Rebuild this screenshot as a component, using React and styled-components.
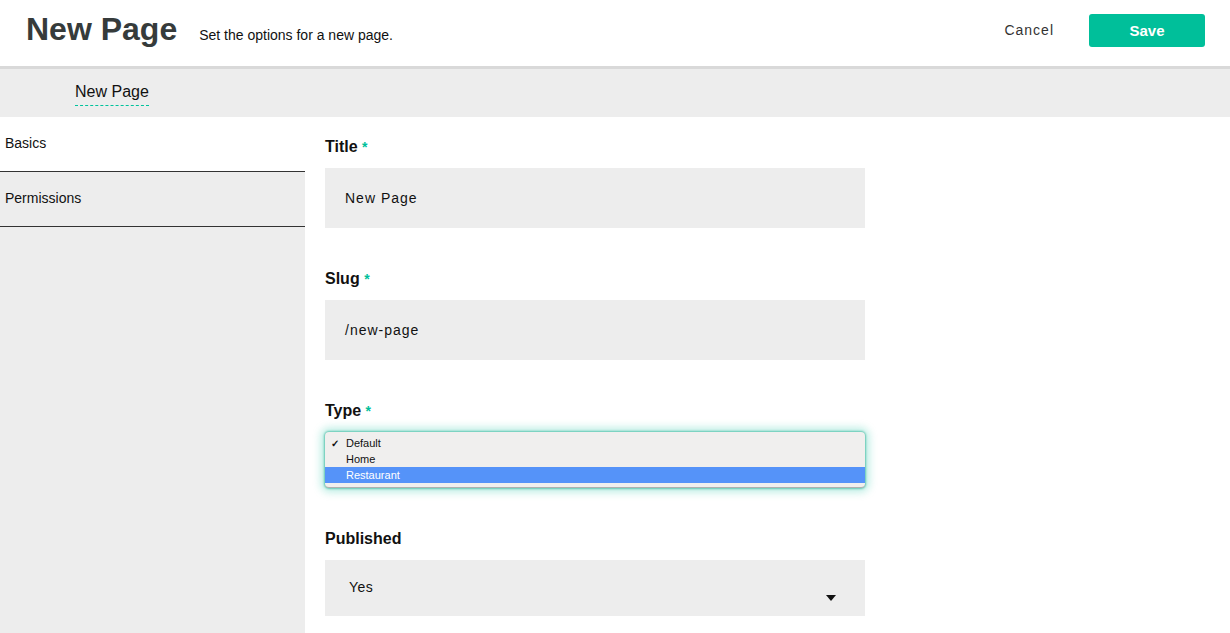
import React from 'react';
import styled, { createGlobalStyle } from 'styled-components';

const GlobalStyle = createGlobalStyle`
  html, body {
    margin: 0;
    padding: 0;
    background: #fff;
    font-family: 'Liberation Sans', Arial, sans-serif;
    color: #111;
  }
  * { box-sizing: border-box; }
`;

const fields = [
  { label: 'Title', required: true, value: 'New Page' },
  { label: 'Slug', required: true, value: '/new-page' },
];

const typeOptions = [
  { name: 'Default', checked: true },
  { name: 'Home' },
  { name: 'Restaurant', active: true },
];

export default function App() {
  return (
    <>
      <GlobalStyle />
      <Header>
        <HeaderLeft>
          <PageTitle>New Page</PageTitle>
          <Subtitle>Set the options for a new page.</Subtitle>
        </HeaderLeft>
        <HeaderActions>
          <CancelButton>Cancel</CancelButton>
          <SaveButton>Save</SaveButton>
        </HeaderActions>
      </Header>

      <TabBar>
        <Tab>New Page</Tab>
      </TabBar>

      <Body>
        <Sidebar>
          <SideItem active>Basics</SideItem>
          <SideItem>Permissions</SideItem>
        </Sidebar>

        <Content>
          {fields.map((f) => (
            <Field key={f.label}>
              <Label>
                {f.label} {f.required && <Star>*</Star>}
              </Label>
              <TextInput>{f.value}</TextInput>
            </Field>
          ))}

          <Field>
            <Label>
              Type <Star>*</Star>
            </Label>
            <OptionList>
              {typeOptions.map((o) => (
                <Option key={o.name} active={o.active}>
                  <Check>{o.checked ? '✓' : ''}</Check>
                  {o.name}
                </Option>
              ))}
            </OptionList>
          </Field>

          <Field>
            <Label>Published</Label>
            <SelectBox>
              <span>Yes</span>
              <svg width="10" height="6" viewBox="0 0 10 6">
                <path d="M0 0 L10 0 L5 6 Z" fill="#111" />
              </svg>
            </SelectBox>
          </Field>
        </Content>
      </Body>
    </>
  );
}

const Header = styled.header`
  height: 69px;
  display: flex;
  align-items: flex-start;
  justify-content: space-between;
  padding: 0 25px 0 26px;
  border-bottom: 3px solid #d9d9d9;
  background: #fff;
`;

const HeaderLeft = styled.div`
  display: flex;
  align-items: baseline;
  gap: 22px;
  padding-top: 10px;
`;

const PageTitle = styled.h1`
  margin: 0;
  font-size: 32px;
  line-height: 38px;
  font-weight: 700;
  color: #363b3b;
`;

const Subtitle = styled.span`
  font-size: 14px;
  color: #111;
`;

const HeaderActions = styled.div`
  display: flex;
  align-items: center;
  gap: 35px;
  padding-top: 14px;
`;

const CancelButton = styled.button`
  border: 0;
  background: none;
  padding: 0 0 2px;
  font-family: inherit;
  font-size: 14px;
  letter-spacing: 1px;
  color: #333;
`;

const SaveButton = styled.button`
  width: 116px;
  height: 33px;
  border: 0;
  border-radius: 3px;
  background: #00bf9a;
  color: #fff;
  font-family: inherit;
  font-size: 15px;
  font-weight: 700;
  padding-bottom: 2px;
`;

const TabBar = styled.nav`
  height: 48px;
  background: #ededed;
  display: flex;
  align-items: flex-start;
  padding: 13px 0 0 75px;
`;

const Tab = styled.div`
  font-size: 16px;
  line-height: 19px;
  padding-bottom: 4px;
  border-bottom: 1px dashed #00c39c;
  color: #111;
`;

const Body = styled.div`
  display: flex;
  min-height: calc(100vh - 117px);
`;

const Sidebar = styled.aside`
  width: 305px;
  flex-shrink: 0;
  background: #ededed;
`;

const SideItem = styled.div`
  height: 55px;
  display: flex;
  align-items: center;
  padding: 0 5px 3px;
  font-size: 14px;
  color: #111;
  background: ${({ active }) => (active ? '#fff' : '#ededed')};
  border-bottom: 1px solid #333;
`;

const Content = styled.main`
  flex: 1;
  padding: 20px 0 0 20px;
  background: #fff;
`;

const Field = styled.div`
  width: 540px;
  margin-bottom: 41px;
`;

const Label = styled.div`
  font-size: 16px;
  line-height: 20px;
  font-weight: 700;
  margin-bottom: 11px;
  color: #111;
`;

const Star = styled.span`
  color: #00bf9a;
  font-size: 14px;
`;

const TextInput = styled.div`
  height: 60px;
  background: #ededed;
  display: flex;
  align-items: center;
  padding-left: 20px;
  font-size: 14px;
  letter-spacing: 1px;
  color: #111;
`;

const OptionList = styled.ul`
  list-style: none;
  margin: 0;
  height: 56px;
  padding: 3px 0 0;
  background: #f0efee;
  border-radius: 4px;
  border-bottom: 1px solid #b0b0b0;
  box-shadow: 0 0 2px 1px rgba(0, 160, 130, 0.5), 0 0 8px 4px rgba(0, 191, 154, 0.28);
`;

const Option = styled.li`
  height: 16px;
  display: flex;
  align-items: center;
  font-size: 11px;
  color: ${({ active }) => (active ? '#fff' : '#111')};
  background: ${({ active }) => (active ? '#5593f9' : 'transparent')};
`;

const Check = styled.span`
  width: 21px;
  padding-left: 6px;
  font-size: 10px;
  font-weight: 700;
`;

const SelectBox = styled.div`
  height: 56px;
  background: #ededed;
  display: flex;
  justify-content: space-between;
  padding: 19px 29px 0 24px;
  font-size: 14px;
  letter-spacing: 0.5px;
  color: #111;

  svg {
    margin-top: 16px;
  }
`;
